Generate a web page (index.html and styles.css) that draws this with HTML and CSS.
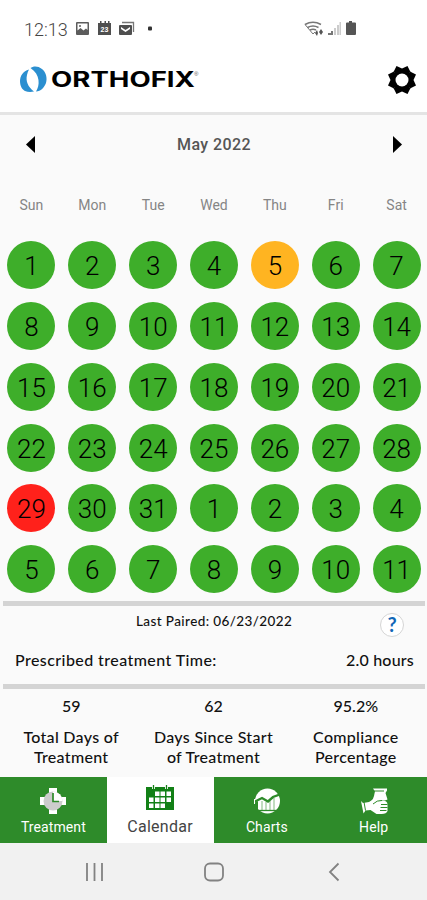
FILE: index.html
```html
<!DOCTYPE html>
<html lang="en">
<head>
<meta charset="utf-8">
<title>Orthofix Calendar</title>
<link rel="stylesheet" href="styles.css">
</head>
<body>
<div class="status">
  <span class="clock">12:13</span>
  <svg class="status-left" width="80" height="16" viewBox="0 0 80 16">
    <path fill="#5c5c5c" fill-rule="evenodd" d="M2 1h11q1 0 1 1v11q0 1-1 1H2q-1 0-1-1V2q0-1 1-1zM2.500 2.500v7l3-2.500 3 2.500 2.500-2 1.500 1.500V2.500z"/>
    <circle cx="5" cy="5" r="1" fill="#5c5c5c"/>
    <path fill="#4f4f4f" d="M23 2h2V0h1.500v2h3V0H31v2h2V0h1.500v2H36v12H23z"/>
    <text class="mini" x="29.500" y="10.500">23</text>
    <path fill="#4f4f4f" fill-rule="evenodd" d="M45 4h11q1 0 1 1v8q0 1-1 1H45q-1 0-1-1V5q0-1 1-1zM46 6v2l4.500 3 4.500-3V6l-4.500 3z"/>
    <path fill="none" stroke="#777" stroke-width="1.300" d="M47 1.500h11.500V11"/>
    <rect x="73" y="5.500" width="4" height="4" rx="1" fill="#333"/>
  </svg>
  <svg class="status-right" width="54" height="16" viewBox="0 0 54 16">
    <g fill="none" stroke="#777" stroke-width="1.500">
      <path d="M1 3.500q8-4.500 16 0M3.500 6.500q5.500-3 11 0M6 9q3-1.700 6 0"/>
      <path stroke-width="1" d="M1 3.500l8 9.500 2-2"/>
    </g>
    <path fill="#555" d="M11 12l2-3 1 3-1 3zM15 11l2-3 2 3-2 3z"/>
    <path fill="#777" d="M24 12h3v2h-3zM27 10h2v4h-2z"/>
    <path fill="#ccc" d="M30 7h2v7h-2zM33 4h2v10h-2zM35.500 1h1.500v13h-1.500z"/>
    <path fill="#555" d="M45 0h3v1.500h3q1 0 1 1V13q0 1-1 1h-8q-1 0-1-1V2.500q0-1 1-1h2z"/>
  </svg>
</div>
<header class="brand">
  <svg width="190" height="32" viewBox="0 0 190 32">
    <path fill="#2b8fd0" d="M9 4.500C3 6 0 11 0 16c0 6 3 9 5 10q4 1.500 9 .5C8 22 5.500 16 7 10q.5-3 2-5.500z"/>
    <path fill="#2b8fd0" d="M10.500 3C13 1 18 .500 22 4c4 3 5.500 9 4 14-2 5-5 8-10 8.500 4-6 4.500-17-5.500-23.500z"/>
    <text class="logo" x="31" y="22.300" textLength="144" lengthAdjust="spacingAndGlyphs">ORTHOFIX</text>
    <text class="reg" x="174" y="11">®</text>
  </svg>
  <svg width="28" height="28" viewBox="-14 -14 28 28">
    <path d="M-8.500-8L-5.500-14L0-11.500L5.500-14L8.500-8z"/>
    <path d="M-8.500-8L-5.500-14L0-11.500L5.500-14L8.500-8z" transform="rotate(90)"/>
    <path d="M-8.500-8L-5.500-14L0-11.500L5.500-14L8.500-8z" transform="rotate(180)"/>
    <path d="M-8.500-8L-5.500-14L0-11.500L5.500-14L8.500-8z" transform="rotate(270)"/>
    <circle r="11"/>
    <circle r="6.500" fill="#fff"/>
  </svg>
</header>
<main>
  <div class="month">
    <svg width="9" height="17" viewBox="0 0 9 17"><path d="M9 0v17L0 8.500z"/></svg>
    <span>May 2022</span>
    <svg width="9" height="17" viewBox="0 0 9 17"><path d="M0 0v17l9-8.500z"/></svg>
  </div>
  <div class="week"><span>Sun</span><span>Mon</span><span>Tue</span><span>Wed</span><span>Thu</span><span>Fri</span><span>Sat</span></div>
  <div class="days">
    <span>1</span><span>2</span><span>3</span><span>4</span><span class="partial">5</span><span>6</span><span>7</span>
    <span>8</span><span>9</span><span>10</span><span>11</span><span>12</span><span>13</span><span>14</span>
    <span>15</span><span>16</span><span>17</span><span>18</span><span>19</span><span>20</span><span>21</span>
    <span>22</span><span>23</span><span>24</span><span>25</span><span>26</span><span>27</span><span>28</span>
    <span class="missed">29</span><span>30</span><span>31</span><span>1</span><span>2</span><span>3</span><span>4</span>
    <span>5</span><span>6</span><span>7</span><span>8</span><span>9</span><span>10</span><span>11</span>
  </div>
  <section class="info">
    <div class="paired"><span>Last Paired: 06/23/2022</span><b class="ask">?</b></div>
    <div class="time"><span>Prescribed treatment Time:</span><span class="hours">2.0 hours</span></div>
  </section>
  <section class="stats">
    <div><p class="value">59</p><p>Total Days of<br>Treatment</p></div>
    <div><p class="value">62</p><p>Days Since Start<br>of Treatment</p></div>
    <div><p class="value">95.2%</p><p>Compliance<br>Percentage</p></div>
  </section>
</main>
<nav class="tabs">
  <div class="tab">
    <svg width="28" height="28" viewBox="0 0 28 28">
      <path fill="#fff" d="M10 1h8v5h-8zM10 22h8v5h-8zM1 10h6v8H1zM21 10h6v8h-6z"/>
      <circle cx="14" cy="14" r="9.500" fill="#ccc"/>
      <path fill="#fff" d="M14 14V4.500a9.500 9.500 0 0 1 9.500 9.500z"/>
      <path fill="none" stroke="#2e8b2a" stroke-width="1.700" d="M14 6v8.500h6"/>
    </svg>
    <span>Treatment</span>
  </div>
  <div class="tab active">
    <svg width="28" height="28" viewBox="0 0 28 28">
      <path fill="#128016" d="M0 2h28v23H0z"/>
      <path fill="#fff" d="M9 6.500h4.500v4.500H9zM14.500 6.500H19v4.500h-4.500zM20.500 6.500H25v4.500h-4.500zM3 12.500h4.500v4.500H3zM9 12.500h4.500v4.500H9zM14.500 12.500H19v4.500h-4.500zM20.500 12.500H25v4.500h-4.500zM3 18.500h4.500v4.500H3zM9 18.500h4.500v4.500H9zM14.500 18.500H19v4.500h-4.500z"/>
      <path stroke="#fff" stroke-width="3" d="M7.500 0v4M20.500 0v4"/>
      <path stroke="#128016" stroke-width="1.300" d="M7.500 0v4M20.500 0v4"/>
    </svg>
    <span>Calendar</span>
  </div>
  <div class="tab">
    <svg width="28" height="28" viewBox="0 0 28 28">
      <circle cx="14.500" cy="14" r="12.500" fill="#fff"/>
      <path fill="none" stroke="#2e8b2a" stroke-width="2.400" d="M1 15l8-4 6 3.500 5-4.500 8-3"/>
      <path fill="none" stroke="#2e8b2a" stroke-width=".6" d="M9 14v9M13 15v8M17 14v9M21 11v12"/>
      <path stroke="#2e8b2a" stroke-width="1.300" d="M3 23.500h22"/>
      <path fill="#2e8b2a" d="M1 16l4-2v9l-4-1z"/>
      <path stroke="#fff" d="M1.500 12v5"/>
    </svg>
    <span>Charts</span>
  </div>
  <div class="tab">
    <svg width="28" height="28" viewBox="0 0 28 28">
      <path fill="#fff" d="M13 1.500h14v2l-1.500 2.500 2 6.500q-3 1.500-6 .5-4-.5-8 3l-3-1q3-3 3.500-6 .5-3 1-4.500z"/>
      <path fill="#fff" d="M1 14l2 2 6-1 4-2.500 9 1q5.500 0 5.500 4v6.500q-1 3-6 3h-5l-6-4-5 .5-2 3z"/>
      <path fill="none" stroke="#2e8b2a" stroke-width="1" d="M14 4h10M4 15l1.500 8.500M13 17q4-4 9-3.500M21 17.500h6.500M20.500 20.500h7M20 23.500h6.500"/>
    </svg>
    <span>Help</span>
  </div>
</nav>
<footer class="system">
  <svg width="427" height="56" viewBox="0 0 427 56" fill="none" stroke="#828282" stroke-width="1.800">
    <path d="M87 20v18M94.500 20v18M102 20v18"/>
    <rect x="205" y="20.500" width="18" height="17" rx="5"/>
    <path d="M338.500 20.500l-8.500 8.500 8.500 8.500"/>
  </svg>
</footer>
</body>
</html>
```
FILE: styles.css
```css
* { box-sizing: border-box; }
body {
  margin: 0;
  width: 427px;
  height: 900px;
  overflow: hidden;
  background: #fafafa;
  font-family: Roboto, sans-serif;
  color: #111;
}
svg { display: block; flex: none; }
p { margin: 0; }
.status {
  display: flex;
  height: 58px;
  padding: 0 69px 0 24px;
  align-items: center;
  background: #fff;
}
.clock { width: 51px; font-size: 18px; font-weight: 300; color: #444; }
.status-right { margin-left: auto; }
.mini { font: bold 7px "Liberation Sans", sans-serif; fill: #fff; text-anchor: middle; }
.brand {
  display: flex;
  height: 57px;
  padding: 7px 11px 0 20px;
  justify-content: space-between;
  align-items: flex-start;
  background: #fff;
  border-bottom: 3px solid #e4e4e4;
}
.brand svg:last-child { margin-top: 1px; }
.logo { font: 700 21px Inter, sans-serif; }
.reg { font: 6px "Liberation Sans", sans-serif; fill: #555; }
.month {
  display: flex;
  height: 58px;
  padding: 0 25px 0 26px;
  align-items: center;
  justify-content: space-between;
  font-size: 16px;
  font-weight: 500;
  letter-spacing: .4px;
  color: #555;
}
.week, .days {
  display: grid;
  grid-template-columns: repeat(7, 1fr);
  padding-left: 1px;
  justify-items: center;
}
.week { height: 62px; line-height: 64px; font-size: 14px; color: #858585; }
.days { height: 364.500px; grid-template-rows: repeat(6, 1fr); align-items: center; }
.days span {
  width: 48px;
  height: 48px;
  border-radius: 50%;
  background: #3eae2a;
  font-size: 26px;
  font-weight: 350;
  line-height: 50px;
  text-align: center;
  color: #000;
}
.days .partial { background: #ffb421; }
.days .missed { background: #ff211b; }
.info {
  height: 88px;
  margin: 1.500px 2px 0 3px;
  border-top: 5px solid #d4d4d4;
  border-bottom: 5px solid #d4d4d4;
  font-family: Lato, sans-serif;
  font-weight: 500;
}
.paired {
  display: flex;
  height: 38px;
  padding: 0 21px 0 133px;
  justify-content: space-between;
  font-size: 13.500px;
  line-height: 31px;
  letter-spacing: .4px;
}
.ask {
  width: 24px;
  height: 24px;
  margin-top: 7px;
  border: 1.500px solid #d5d5d5;
  border-radius: 50%;
  background: #fff;
  color: #1267b7;
  font-size: 20px;
  line-height: 21px;
  letter-spacing: 0;
  text-align: center;
}
.time {
  display: flex;
  padding: 0 11px 0 12px;
  justify-content: space-between;
  font-size: 16px;
  line-height: 32px;
  letter-spacing: .42px;
}
.hours { letter-spacing: .2px; }
.stats {
  display: grid;
  height: 88px;
  grid-template-columns: repeat(3, 1fr);
  padding-top: 8px;
  font: 500 16px/20px Lato, sans-serif;
  letter-spacing: .3px;
  text-align: center;
}
.value { height: 30px; line-height: 18px; letter-spacing: 0; }
.tabs {
  display: grid;
  height: 66px;
  grid-template-columns: repeat(4, 1fr);
  background: #2e8b2a;
}
.tab {
  display: flex;
  flex-direction: column;
  align-items: center;
  padding-top: 10px;
  color: #fff;
  font-size: 14px;
  line-height: 24px;
  letter-spacing: .1px;
}
.tab.active { background: #fff; color: #444; font-size: 16px; padding-top: 8px; letter-spacing: .3px; }
.tab.active span { margin-top: 2px; }
.system { height: 58px; background: #f1f1f1; }
```
